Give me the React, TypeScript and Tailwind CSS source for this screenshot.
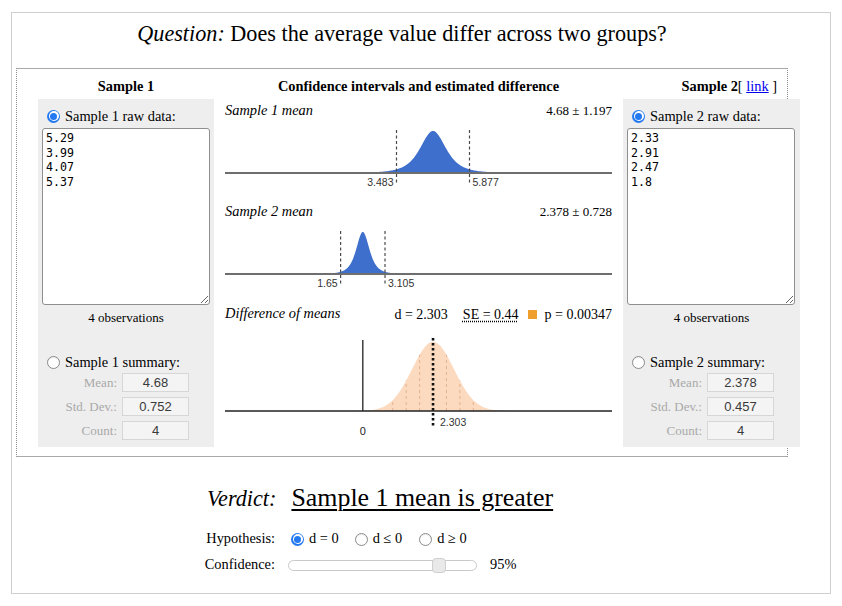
import React from "react";

const K = 30.49;
const BLUE = "#3e6fcc";

function dens(t: number, df: number) {
  if (df <= 0) return Math.exp(-0.5 * t * t);
  return Math.pow(1 + (t * t) / df, -(df + 1) / 2);
}

function curvePath(cx: number, se: number, df: number, peak: number, base: number, span = 6) {
  let d = `M ${(cx - span * se).toFixed(2)} ${base}`;
  for (let i = -span * 20; i <= span * 20; i++) {
    const t = i / 20;
    const x = cx + t * se;
    const y = base - peak * dens(t, df);
    d += ` L ${x.toFixed(2)} ${y.toFixed(2)}`;
  }
  d += ` L ${(cx + span * se).toFixed(2)} ${base} Z`;
  return d;
}

function Radio({ checked = false }: { checked?: boolean }) {
  if (checked) {
    return (
      <span className="w-[13px] h-[13px] rounded-full bg-[#2479f0] flex items-center justify-center shrink-0">
        <span className="w-[10px] h-[10px] rounded-full bg-white flex items-center justify-center">
          <span className="w-[7px] h-[7px] rounded-full bg-[#2479f0]" />
        </span>
      </span>
    );
  }
  return <span className="block w-[13px] h-[13px] rounded-full border border-[#8a8a8a] bg-white shrink-0 shadow-[inset_0_1px_1px_rgba(0,0,0,0.08)]" />;
}

function Panel({ n, data, mean, sd, count }: { n: number; data: string; mean: string; sd: string; count: string }) {
  const rows: [string, string][] = [
    ["Mean:", mean],
    ["Std. Dev.:", sd],
    ["Count:", count],
  ];
  return (
    <div className="h-[348px] bg-[#eeeeee] pt-[9px] px-[4px]">
      <div className="h-[16px] flex items-center pl-[5px] text-[14.4px] leading-[16px]">
        <Radio checked />
        <span className="ml-[5px]">Sample {n} raw data:</span>
      </div>
      <textarea
        readOnly
        defaultValue={data}
        className="mt-[4px] block w-[168px] h-[177px] border border-[#8f8f8f] rounded-[3px] bg-white px-[3px] py-[2px] font-['DejaVu_Sans_Mono',monospace] text-[11.6px] leading-[14.7px] text-black outline-none resize"
      />
      <div className="mt-[5px] h-[16px] leading-[16px] text-center text-[13px]">{count} observations</div>
      <div className="mt-[28px] h-[16px] flex items-center pl-[5px] text-[14.4px] leading-[16px]">
        <Radio />
        <span className="ml-[5px]">Sample {n} summary:</span>
      </div>
      <div className="mt-[3px] flex flex-col gap-[5px]">
        {rows.map(([l, v]) => (
          <div key={l} className="flex items-center h-[19px]">
            <div className="w-[75px] text-right text-[13px] text-[#a9a9a9] leading-[19px]">{l}</div>
            <div className="ml-[5px] w-[67px] h-[19px] border border-[#d6d6d6] bg-[#f4f4f4] text-center font-['Liberation_Sans',sans-serif] text-[13px] leading-[17px] text-[#3a3a3a]">
              {v}
            </div>
          </div>
        ))}
      </div>
    </div>
  );
}

function MeanChart({ cx, se, half, lo, hi }: { cx: number; se: number; half: number; lo: string; hi: string }) {
  return (
    <svg width="387" height="77" className="block">
      <path d={curvePath(cx, se, 3, 42, 50, 8)} fill={BLUE} />
      <line x1="0" y1="50" x2="387" y2="50" stroke="#6e6e6e" strokeWidth="1.8" />
      <line x1={cx - half} y1="7" x2={cx - half} y2="62" stroke="#4a4a4a" strokeWidth="1.2" strokeDasharray="3 2.5" />
      <line x1={cx + half} y1="7" x2={cx + half} y2="62" stroke="#4a4a4a" strokeWidth="1.2" strokeDasharray="3 2.5" />
      <text x={cx - half - 3} y="62.5" textAnchor="end" fontFamily="Liberation Sans, sans-serif" fontSize="10.5" fill="#333">
        {lo}
      </text>
      <text x={cx + half + 3} y="62.5" fontFamily="Liberation Sans, sans-serif" fontSize="10.5" fill="#333">
        {hi}
      </text>
    </svg>
  );
}

function DiffChart() {
  const x0 = 208 - 4.68 * K + 2.378 * K; // position of 0
  const cx = x0 + 2.303 * K;
  const se = 0.44 * K;
  const base = 85;
  const peak = 69;
  const sig = 21;
  const ticks = [-3, -2, -1, 1, 2, 3];
  return (
    <svg width="387" height="121" className="block">
      <path d={curvePath(cx, sig, 0, peak, base, 4)} fill="#fbd8bd" fillOpacity="0.95" />
      {ticks.map((k) => (
        <line
          key={k}
          x1={cx + k * se}
          x2={cx + k * se}
          y1={base}
          y2={base - peak * dens((k * se) / sig, 0)}
          stroke="#e3b28f"
          strokeWidth="1"
          strokeDasharray="3 3"
        />
      ))}
      <line x1="0" y1={base} x2="387" y2={base} stroke="#222" strokeWidth="1.3" />
      <line x1={x0} y1="14" x2={x0} y2={base} stroke="#222" strokeWidth="1.3" />
      <line x1={cx} y1="12" x2={cx} y2="101" stroke="#111" strokeWidth="2.6" strokeDasharray="2.5 2.5" />
      <text x={cx + 7} y="100" fontFamily="Liberation Sans, sans-serif" fontSize="10.5" fill="#333">
        2.303
      </text>
      <text x={x0} y="109" textAnchor="middle" fontFamily="Liberation Sans, sans-serif" fontSize="11" fill="#222">
        0
      </text>
    </svg>
  );
}

export default function App() {
  const c1 = 208;
  const c2 = 208 - (4.68 - 2.378) * K;
  return (
    <div className="w-[842px] h-[606px] bg-white pt-[12px] pl-[11px] font-['Liberation_Serif',serif] text-black">
      <div className="w-[820px] h-[582px] border border-[#cfcfcf]">
        <div className="ml-[4px] w-[772px]">
          <div className="mt-[8px] h-[26px] leading-[26px] text-center text-[22.2px] whitespace-nowrap">
            <i>Question:</i> Does the average value differ across two groups?
          </div>
          <div className="mt-[21px] h-[389px] border border-[#a9a9a9] [border-left-style:dotted] [border-right-style:dotted] border-l-[#8a8a8a] border-r-[#8a8a8a] flex pl-[21px]">
            {/* left column */}
            <div className="w-[176px] shrink-0">
              <div className="h-[30px] pt-[9px] leading-[16px] text-center font-bold text-[14.4px]">Sample 1</div>
              <Panel n={1} data={"5.29\n3.99\n4.07\n5.37"} mean="4.68" sd="0.752" count="4" />
            </div>
            {/* middle column */}
            <div className="ml-[11px] w-[387px] shrink-0">
              <div className="h-[30px] pt-[9px] leading-[16px] text-center font-bold text-[14.4px] whitespace-nowrap">
                Confidence intervals and estimated difference
              </div>
              <div className="h-[101px]">
                <div className="h-[24px] flex items-center justify-between">
                  <i className="text-[14.4px]">Sample 1 mean</i>
                  <span className="text-[13px]">4.68 ± 1.197</span>
                </div>
                <MeanChart cx={c1} se={13.6} half={1.197 * K} lo="3.483" hi="5.877" />
              </div>
              <div className="h-[102px]">
                <div className="h-[24px] flex items-center justify-between">
                  <i className="text-[14.4px]">Sample 2 mean</i>
                  <span className="text-[13px]">2.378 ± 0.728</span>
                </div>
                <MeanChart cx={c2} se={0.2285 * K} half={0.728 * K} lo="1.65" hi="3.105" />
              </div>
              <div>
                <div className="h-[24px] flex items-center text-[14px] whitespace-nowrap">
                  <i className="text-[14.4px]">Difference of means</i>
                  <span className="ml-auto">d = 2.303</span>
                  <span className="ml-[15px] underline decoration-dotted underline-offset-[2px]">SE = 0.44</span>
                  <span className="ml-[9px] w-[9px] h-[9px] bg-[#efa02c] inline-block" />
                  <span className="ml-[8px]">p = 0.00347</span>
                </div>
                <DiffChart />
              </div>
            </div>
            {/* right column */}
            <div className="ml-[11px] w-[177px] shrink-0">
              <div className="h-[30px] pt-[9px] leading-[16px] text-right pr-[23px] text-[14.4px] whitespace-nowrap">
                <b>Sample 2</b>[ <span className="text-[#0000ee] underline">link</span> ]
              </div>
              <Panel n={2} data={"2.33\n2.91\n2.47\n1.8"} mean="2.378" sd="0.457" count="4" />
            </div>
          </div>

          {/* verdict */}
          <div className="mt-[24px] pl-[191px] flex items-baseline h-[34px] leading-[34px] whitespace-nowrap">
            <i className="text-[22.2px]">Verdict:</i>
            <span className="ml-[15px] text-[25.9px] underline underline-offset-[3px] decoration-[1.5px]">Sample 1 mean is greater</span>
          </div>

          <div className="mt-[14px] pl-[184px] flex items-center h-[20px] text-[14.4px] whitespace-nowrap">
            <div className="w-[75px] text-right">Hypothesis:</div>
            <span className="ml-[16px]"><Radio checked /></span>
            <span className="ml-[5px]">d = 0</span>
            <span className="ml-[16px]"><Radio /></span>
            <span className="ml-[5px]">d ≤ 0</span>
            <span className="ml-[17px]"><Radio /></span>
            <span className="ml-[5px]">d ≥ 0</span>
          </div>

          <div className="mt-[6px] pl-[184px] flex items-center h-[20px] text-[14.4px] whitespace-nowrap">
            <div className="w-[75px] text-right">Confidence:</div>
            <div className="ml-[13px] w-[189px] h-[11px] relative rounded-full border border-[#c9c9c9] bg-white">
              <div className="absolute left-[143px] top-[-3px] w-[14px] h-[15px] rounded-[4px] border border-[#cfcfcf] bg-[#e9e9e9]" />
            </div>
            <span className="ml-[13px]">95%</span>
          </div>
        </div>
      </div>
    </div>
  );
}
